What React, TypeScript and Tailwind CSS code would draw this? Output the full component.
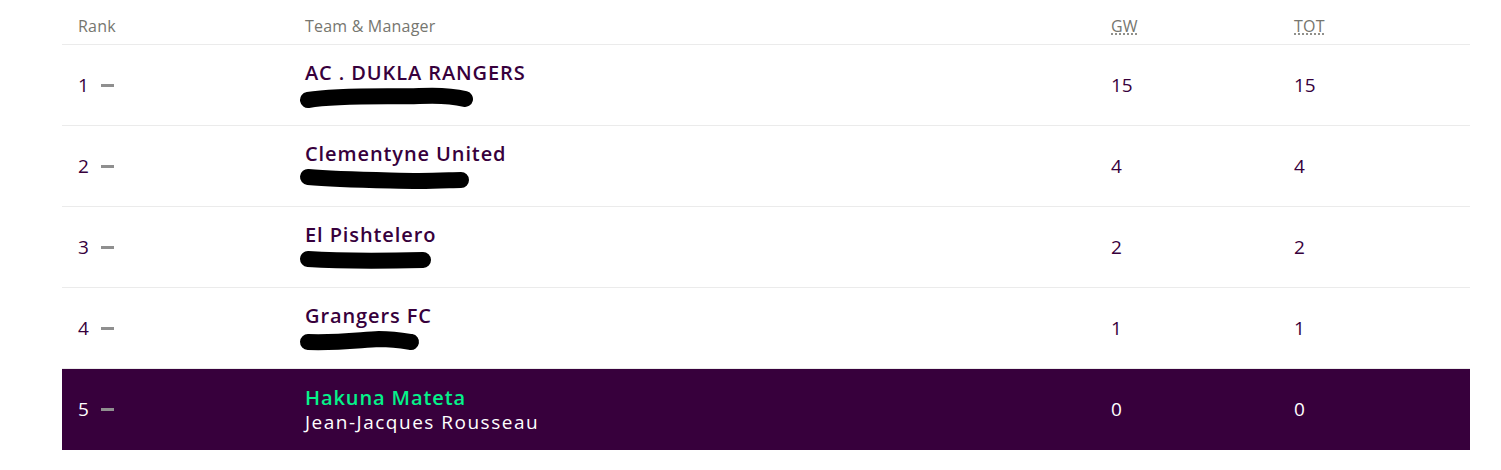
import React from 'react'

type Entry = {
  rank: number
  team: string
  manager: string
  gw: number
  tot: number
  mine?: boolean
  blot?: { w: number; d: string }
}

const entries: Entry[] = [
  { rank: 1, team: 'AC . DUKLA RANGERS', manager: 'Redacted Manager', gw: 15, tot: 15, blot: { w: 176, d: 'M9 13 C40 8 90 10 120 9 C140 8 158 10 166 12' } },
  { rank: 2, team: 'Clementyne United', manager: 'Redacted Manager', gw: 4, tot: 4, blot: { w: 172, d: 'M9 9 C40 12 80 12 120 13 C140 13 154 12 162 12' } },
  { rank: 3, team: 'El Pishtelero', manager: 'Redacted', gw: 2, tot: 2, blot: { w: 134, d: 'M9 10 C40 12 80 12 124 11' } },
  { rank: 4, team: 'Grangers FC', manager: 'Redacted', gw: 1, tot: 1, blot: { w: 122, d: 'M9 12 C40 13 60 10 80 9 C95 9 106 11 112 12' } },
  { rank: 5, team: 'Hakuna Mateta', manager: 'Jean-Jacques Rousseau', gw: 0, tot: 0, mine: true },
]

const font = { fontFamily: '"Open Sans", "Noto Sans", sans-serif' }

function Blot({ w, d }: { w: number; d: string }) {
  return (
    <svg width={w} height={24} viewBox={`0 0 ${w} 22`} className="absolute left-[-6px] top-[1px]">
      <path d={d} stroke="#000" strokeWidth={16} strokeLinecap="round" fill="none" />
    </svg>
  )
}

export default function App() {
  return (
    <div className="bg-white w-[1501px] h-[470px]" style={font}>
      <div className="ml-[62px] w-[1408px]">
        <div className="grid grid-cols-[243px_806px_183px_176px] h-[45px] border-b border-[#ebebeb] text-[16px] tracking-[0.2px] text-[#76766f]">
          <div className="pl-4 pt-[14px]">Rank</div>
          <div className="pt-[14px]">Team &amp; Manager</div>
          <div className="pt-[14px]">
            <abbr title="Gameweek" className="underline decoration-dotted underline-offset-2">GW</abbr>
          </div>
          <div className="pt-[14px]">
            <abbr title="Total" className="underline decoration-dotted underline-offset-2">TOT</abbr>
          </div>
        </div>
        {entries.map((e) => (
          <div
            key={e.rank}
            className={
              e.mine
                ? 'grid grid-cols-[243px_806px_183px_176px] h-[81px] items-center bg-[#37003c] text-white'
                : 'grid grid-cols-[243px_806px_183px_176px] h-[81px] items-center border-b border-[#ebebeb] text-[#37003c]'
            }
          >
            <div className="pl-4 flex items-center gap-[12px] text-[19px]">
              <span>{e.rank}</span>
              <span className="block w-[13px] h-[3px] bg-[#8f8f8f]" />
            </div>
            <div className="flex flex-col leading-[25px]">
              <span
                className={
                  e.mine
                    ? 'text-[20px] font-semibold tracking-[0.9px] text-[#04f28a]'
                    : 'text-[20px] font-semibold tracking-[0.9px]'
                }
              >
                {e.team}
              </span>
              <span className="relative text-[19px] tracking-[1.5px]">
                {e.blot ? (
                  <span className="relative inline-block h-[25px]">
                    <span className="text-[#9a9a9a]">&nbsp;</span>
                    <Blot w={e.blot.w} d={e.blot.d} />
                  </span>
                ) : (
                  e.manager
                )}
              </span>
            </div>
            <div className="text-[19px]">{e.gw}</div>
            <div className="text-[19px]">{e.tot}</div>
          </div>
        ))}
      </div>
    </div>
  )
}
